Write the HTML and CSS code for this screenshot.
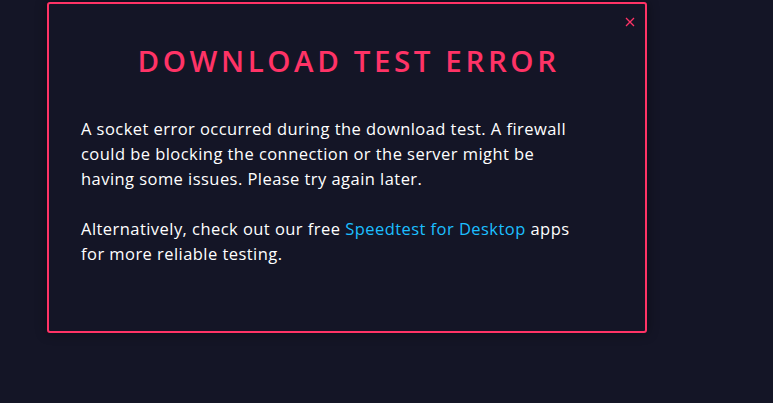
FILE: index.html
```html
<!DOCTYPE html>
<html>
<head>
<meta charset="utf-8">
<link rel="stylesheet" href="styles.css">
</head>
<body>
<div class="modal">
  <button class="close" aria-label="Close">
    <svg width="10" height="10" viewBox="0 0 10 10"><path d="M1 1L9 9M9 1L1 9" stroke="#ff3366" stroke-width="1.3"/></svg>
  </button>
  <h1 class="title">DOWNLOAD TEST ERROR</h1>
  <p class="text">A socket error occurred during the download test. A firewall could be blocking the connection or the server might be having some issues. Please try again later.</p>
  <p class="text">Alternatively, check out our free <a class="link" href="#">Speedtest for Desktop</a> apps for more reliable testing.</p>
</div>
</body>
</html>
```
FILE: styles.css
```css
html, body {
  margin: 0;
  padding: 0;
  background: #141526;
  height: 100%;
}
body {
  padding: 2px 0 0 47px;
  box-sizing: border-box;
  font-family: "Open Sans", sans-serif;
}
.modal {
  position: relative;
  width: 600px;
  height: 331px;
  box-sizing: border-box;
  border: 2px solid #ff3366;
  border-radius: 3px;
  background: #141526;
  box-shadow: 0 0 12px rgba(0,0,0,0.45);
  padding: 36px 32px 0 32px;
}
.close {
  position: absolute;
  top: 13px;
  right: 10px;
  background: none;
  border: 0;
  padding: 0;
  width: 10px;
  height: 10px;
  display: block;
}
.close svg { display: block; }
.title {
  margin: 0 0 34px;
  text-align: center;
  color: #ff3366;
  font-size: 29.5px;
  font-weight: 600;
  line-height: 42px;
  letter-spacing: 3.6px;
  padding-left: 3px;
}
.text {
  margin: 0 0 25px;
  color: #ffffff;
  font-size: 16.5px;
  line-height: 25px;
  font-weight: 500;
  letter-spacing: 0.45px;
  width: 500px;
}
.link {
  color: #1cbfff;
  text-decoration: none;
}
```
